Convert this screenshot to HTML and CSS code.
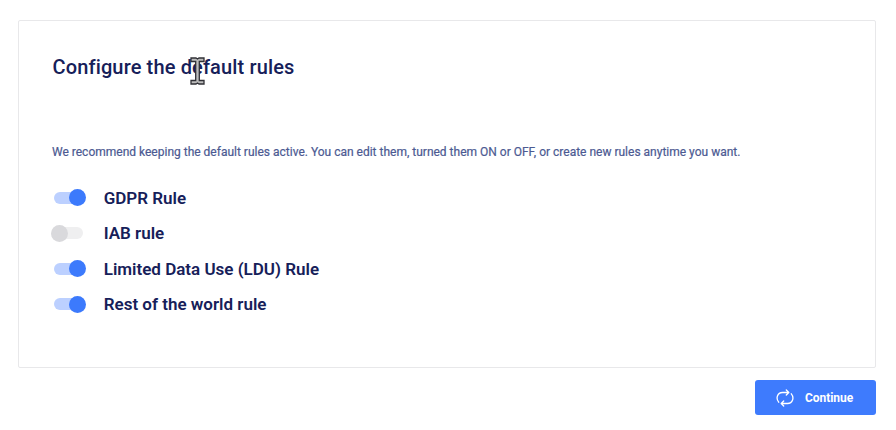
FILE: index.html
```html
<!DOCTYPE html>
<html lang="en">
<head>
<meta charset="UTF-8">
<meta name="viewport" content="width=device-width, initial-scale=1.0">
<title>Default rules</title>
<link rel="stylesheet" href="styles.css">
</head>
<body>
  <div class="card">
    <h1 class="title">Configure the default rules
      <svg class="cursor" width="15" height="28" viewBox="0 0 15 28">
        <path d="M1 1h5l1.500 1L9 1h5v3.500H9.300v19H14V27H9l-1.500-1L6 27H1v-3.500h4.700v-19H1z" fill="#bdbdbd" stroke="#303036" stroke-width="1.300"/>
      </svg>
    </h1>
    <p class="intro">We recommend keeping the default rules active. You can edit them, turned them ON or OFF, or create new rules anytime you want.</p>
    <div class="rules">
      <label class="rule"><span class="toggle on"></span><span class="name">GDPR Rule</span></label>
      <label class="rule"><span class="toggle"></span><span class="name">IAB rule</span></label>
      <label class="rule"><span class="toggle on"></span><span class="name">Limited Data Use (LDU) Rule</span></label>
      <label class="rule"><span class="toggle on"></span><span class="name">Rest of the world rule</span></label>
    </div>
  </div>
  <div class="actions">
    <button class="continue">
      <svg width="18" height="18" viewBox="0 0 18 18" fill="none" stroke="#fff" stroke-width="1.300" stroke-linecap="round" stroke-linejoin="round">
        <path d="M2.700 13.200C-.4 9.500 1.200 3.500 6.500 3.500H12.500M10.300 1l2.500 2.500L10.300 6"/>
        <path d="M15.300 4.800C18.400 8.500 16.800 14.500 11.500 14.500H5.500M7.700 12l-2.500 2.500L7.700 17"/>
      </svg>
      <span>Continue</span>
    </button>
  </div>
</body>
</html>
```

FILE: styles.css
```css
* {
  box-sizing: border-box;
}
body {
  margin: 0;
  padding: 20px 20px 0 18px;
  font-family: Roboto, sans-serif;
  background-color: #fff;
  color: #162059;
}
.card {
  height: 348px;
  padding: 33px 33px 0;
  border: 1px solid #e8e8ea;
  border-radius: 2px;
}
.title {
  position: relative;
  margin: 0;
  padding-left: 0.500px;
  font-size: 20px;
  line-height: 26px;
  font-weight: 500;
  letter-spacing: 0.140px;
}
/* text cursor over the heading */
.cursor {
  position: absolute;
  left: 138px;
  top: 3px;
}
.intro {
  margin: 64px 0 0;
  font-size: 12px;
  line-height: 16px;
  color: #4c5a92;
  white-space: nowrap;
  -webkit-text-stroke: 0.200px #4c5a92;
}
.rules {
  margin-top: 19.800px;
}
.rule {
  display: flex;
  align-items: center;
  height: 35.600px;
}
.toggle {
  position: relative;
  width: 29px;
  height: 12px;
  margin: 0 20.700px 0 2px;
  border-radius: 6px;
  background-color: #efeff0;
}
.toggle::after {
  content: "";
  position: absolute;
  left: -3px;
  top: -2.500px;
  width: 17px;
  height: 17px;
  border-radius: 50%;
  background-color: #d9d9dc;
}
.toggle.on {
  background-color: #bcd0ff;
}
.toggle.on::after {
  left: 14.500px;
  background-color: #3c7afc;
}
.name {
  font-size: 17px;
  font-weight: 600;
}
.actions {
  display: flex;
  justify-content: flex-end;
  margin-top: 12px;
}
.continue {
  display: flex;
  align-items: center;
  width: 121px;
  height: 35px;
  padding: 0 0 0 21px;
  border: 0;
  border-radius: 3px;
  background-color: #3e7bfd;
  color: #fff;
  font-family: Roboto, sans-serif;
  font-size: 12px;
  font-weight: 700;
  letter-spacing: -0.050px;
}
.continue span {
  margin-left: 11px;
}
```
